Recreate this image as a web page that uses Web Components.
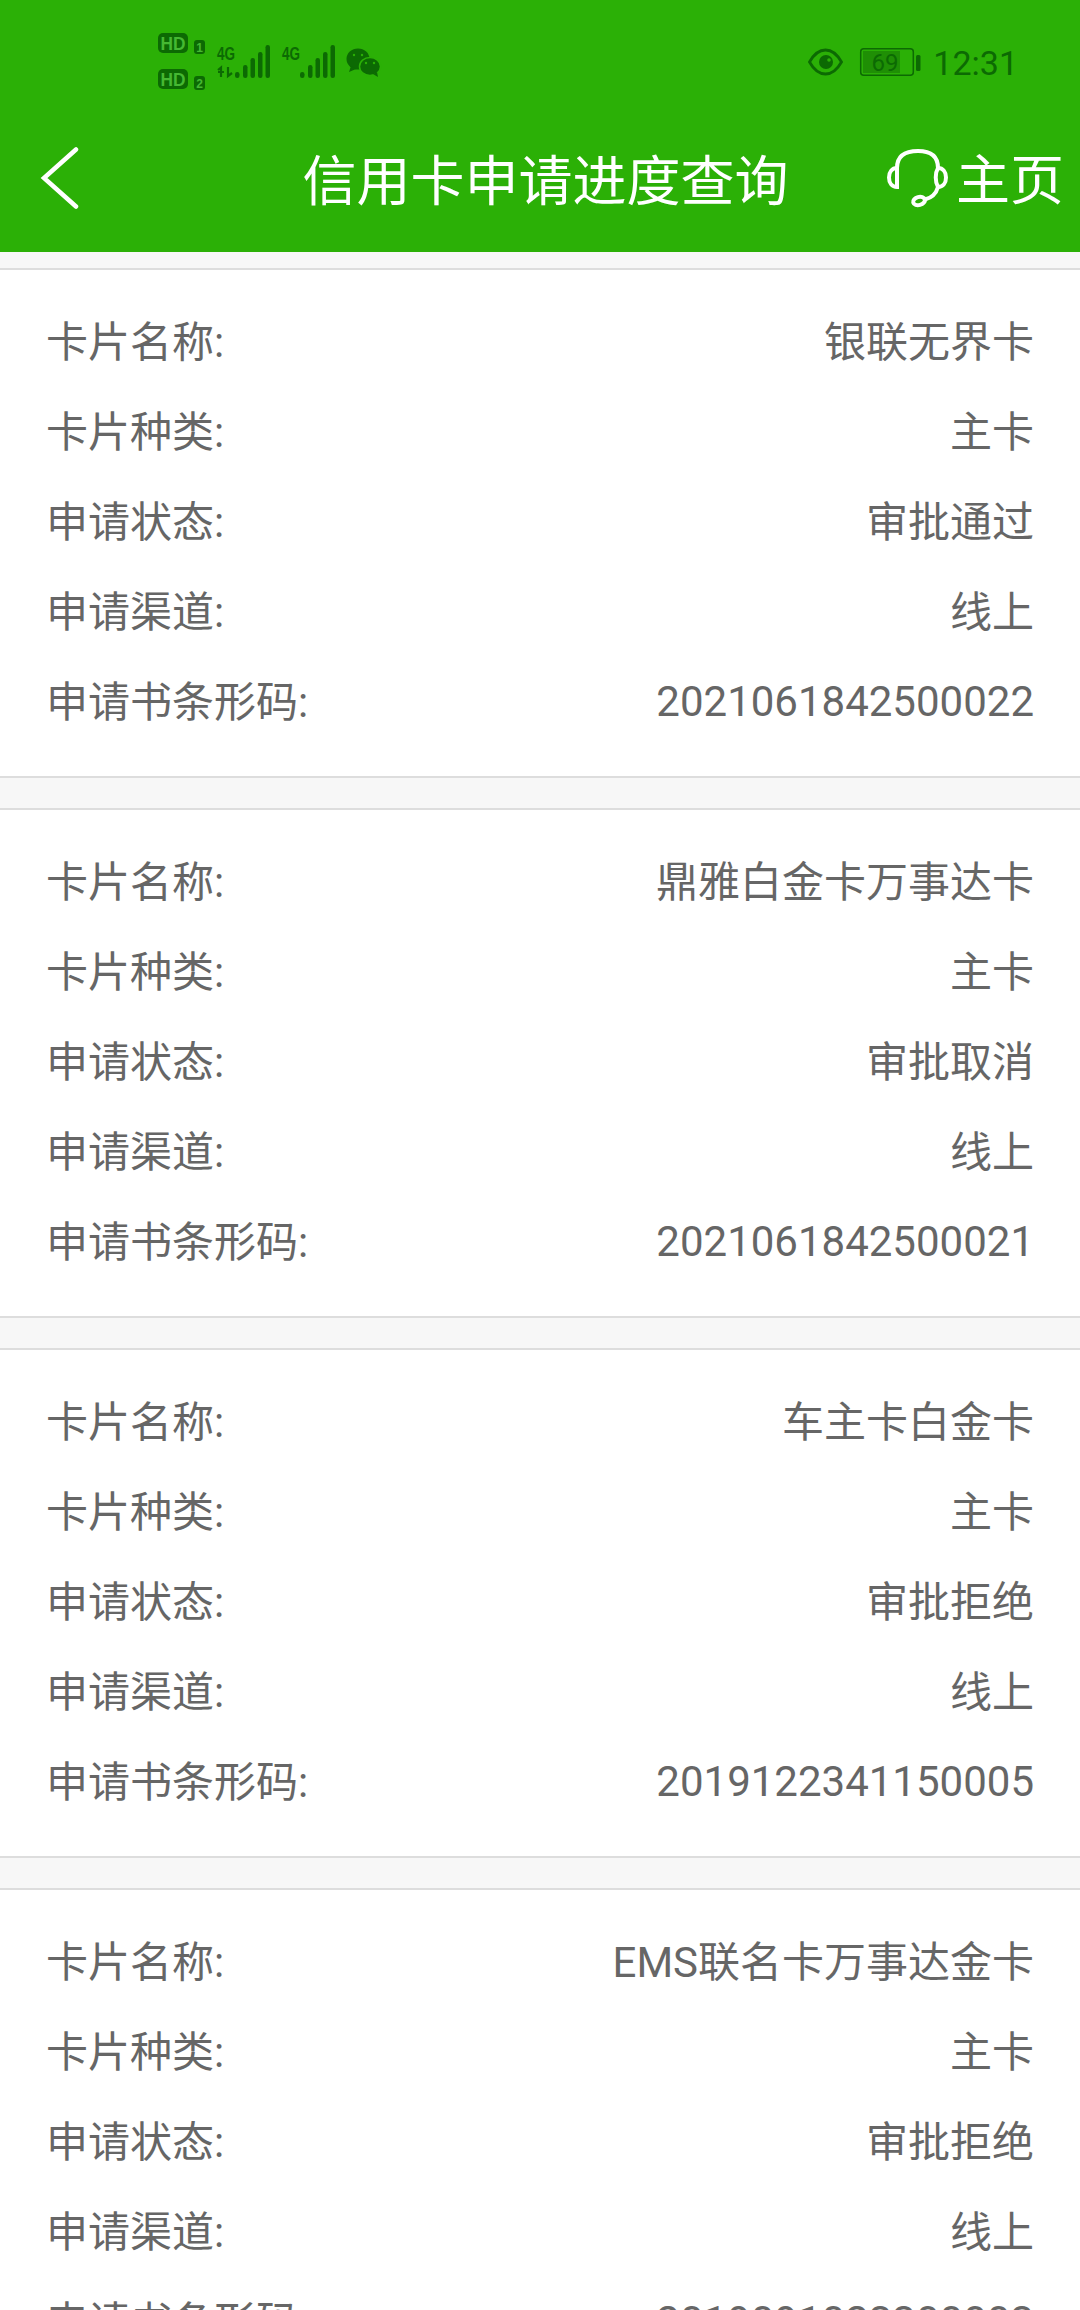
<!DOCTYPE html>
<html lang="zh"><head><meta charset="utf-8"><style>
html,body{margin:0;padding:0;width:1080px;height:2310px;overflow:hidden;background:#f7f7f7;font-family:"Noto Sans CJK SC",Roboto,sans-serif}
</style></head><body>
<app-header></app-header>
<card-list>
<app-card name="银联无界卡" status="审批通过" code="2021061842500022"></app-card>
<app-card name="鼎雅白金卡万事达卡" status="审批取消" code="2021061842500021"></app-card>
<app-card name="车主卡白金卡" status="审批拒绝" code="2019122341150005"></app-card>
<app-card name="EMS联名卡万事达金卡" status="审批拒绝" code="2019091023300003"></app-card>
</card-list>
<script>
class AppHeader extends HTMLElement{constructor(){super();this.attachShadow({mode:'open'}).innerHTML=`<style>
:host{display:block;height:252px;background:#2bb006;color:#fff}
.status{height:120px;display:flex;align-items:flex-start;justify-content:space-between;padding:26px 62px 0 156px;color:#0c6a03;box-sizing:border-box}
.right{display:flex;align-items:center;margin-top:18px}
.time{font:34px/34px Roboto,sans-serif;margin:2px 0 0 11px;color:#0c6a03}
.nav{height:132px;box-sizing:border-box;display:grid;grid-template-columns:1fr auto 1fr;align-items:center;padding:0 16px 14px 40px}
.title{font-size:54px;margin:-3px 0 0 -13px;white-space:nowrap}
.home{display:flex;align-items:center;font-size:54px;gap:8px;justify-self:end}
.home span{margin-top:-5px}
svg{display:block}
</style>
<div class="status">
<svg width="226" height="74" viewBox="156 26 226 74">
<g font-family="Liberation Sans" font-weight="700" text-anchor="middle" fill="#45b832">
<rect x="158" y="33" width="30" height="20" rx="5" fill="#0c6a03"/><text x="173" y="49.500" font-size="18" textLength="25" lengthAdjust="spacingAndGlyphs">HD</text>
<rect x="194" y="40" width="11" height="14" rx="3" fill="#0c6a03"/><text x="199.500" y="52" font-size="12">1</text>
<rect x="158" y="69" width="30" height="20" rx="5" fill="#0c6a03"/><text x="173" y="85.500" font-size="18" textLength="25" lengthAdjust="spacingAndGlyphs">HD</text>
<rect x="194" y="76" width="11" height="14" rx="3" fill="#0c6a03"/><text x="199.500" y="88" font-size="12">2</text>
</g>
<g font-family="Liberation Sans" font-weight="700" font-size="18" fill="#0c6a03">
<text x="217" y="60" textLength="18" lengthAdjust="spacingAndGlyphs">4G</text>
<text x="282" y="60" textLength="18" lengthAdjust="spacingAndGlyphs">4G</text>
</g>
<path d="M218 70l3-2.500V77M218 72h6M228 67v9l4-3" stroke="#0c6a03" stroke-width="2.200" fill="none"/>
<g fill="#0c6a03">
<rect x="235" y="72" width="4.500" height="6" rx="2.200"/><rect x="243" y="65" width="4.500" height="13" rx="2.200"/><rect x="250.500" y="58" width="4.500" height="20" rx="2.200"/><rect x="258" y="52" width="4.500" height="26" rx="2.200"/><rect x="265.500" y="45" width="4.500" height="33" rx="2.200"/>
<rect x="300" y="72" width="4.500" height="6" rx="2.200"/><rect x="308" y="65" width="4.500" height="13" rx="2.200"/><rect x="315.500" y="58" width="4.500" height="20" rx="2.200"/><rect x="323" y="52" width="4.500" height="26" rx="2.200"/><rect x="330.500" y="45" width="4.500" height="33" rx="2.200"/>
<ellipse cx="358" cy="59" rx="11.500" ry="10.500"/><path d="M351 66l-2 6 7-3z"/>
<ellipse cx="370" cy="66.500" rx="10.500" ry="9" stroke="#2bb006" stroke-width="1.500"/><path d="M373 74l5 3-1-5z"/>
</g>
<g fill="#2bb006"><circle cx="354" cy="55" r="1.200"/><circle cx="362" cy="55" r="1.200"/><circle cx="366" cy="63" r="1.200"/><circle cx="374" cy="63" r="1.200"/></g>
</svg>
<div class="right">
<svg width="116" height="34" viewBox="806 44 116 34">
<path d="M809.500 61C814 53 819 49 825.500 49S837 53 841.500 61C837 69 832 73 825.500 73S814 69 809.500 61z" fill="none" stroke="#0c6a03" stroke-width="2.800"/><circle cx="826" cy="61" r="7" fill="#0c6a03"/><circle cx="829" cy="59" r="1.800" fill="#2bb006"/>
<rect x="860.700" y="47.700" width="52.600" height="26.600" rx="3" fill="none" stroke="#0c6a03" stroke-width="1.500"/><rect x="863" y="50" width="37" height="22" fill="#1f8f05"/><text x="885" y="70" font-family="Roboto" font-size="24" fill="#0c6a03" text-anchor="middle">69</text>
<rect x="916" y="54" width="4.500" height="16" rx="1.500" fill="#0c6a03"/>
</svg>
<span class="time">12:31</span></div></div>
<div class="nav">
<svg width="40" height="64" viewBox="40 147 40 64"><path d="M76 149.500L44 178l32 28.500" fill="none" stroke="#fff" stroke-width="4.500" stroke-linecap="round"/></svg>
<div class="title">信用卡申请进度查询</div>
<div class="home"><svg width="62" height="70" viewBox="886 144 62 70" fill="none" stroke="#fff" stroke-width="4"><path d="M897 168C897 156 905 151 918 151S938 156 938 168"/><path d="M897 168C892 168 889 172 889 177.500S892 187 897 187z"/><path d="M938 168C943 168 946 172 946 177.500S943 187 938 187C935 182 935 173 938 168z"/><path d="M938 187C936 194 931 198 925 199.500"/><ellipse cx="919" cy="201" rx="6" ry="4" transform="rotate(-15 919 201)"/></svg><span>主页</span></div>
</div>`}}
customElements.define('app-header',AppHeader);
class CardList extends HTMLElement{constructor(){super();this.attachShadow({mode:'open'}).innerHTML=`<style>:host{display:flex;flex-direction:column;gap:30px;padding-top:16px}</style><slot></slot>`}}
customElements.define('card-list',CardList);
class InfoRow extends HTMLElement{constructor(){super();this.attachShadow({mode:'open'}).innerHTML=`<style>
:host{display:flex;justify-content:space-between;align-items:center;height:90px;color:#666;font-size:42px;font-family:Roboto,"Noto Sans CJK SC",sans-serif}
:host([numeric]) .v{padding-top:6px}
</style><span><slot name="k"></slot></span><span class="v"><slot name="v"></slot></span>`}}
customElements.define('info-row',InfoRow);
class AppCard extends HTMLElement{constructor(){super();const r=this.attachShadow({mode:'open'});
r.innerHTML=`<style>:host{display:block;box-sizing:border-box;height:510px;flex:none;background:#fff;border-top:2px solid #ddd;border-bottom:2px solid #ddd;padding:23px 46px 0 46px}</style>`;
const rows=[['卡片名称:',this.getAttribute('name')],['卡片种类:','主卡'],['申请状态:',this.getAttribute('status')],['申请渠道:','线上'],['申请书条形码:',this.getAttribute('code')]];
for(const [k,v] of rows){const e=document.createElement('info-row');if(/^\d+$/.test(v))e.setAttribute('numeric','');const a=document.createElement('span');a.slot='k';a.textContent=k;const b=document.createElement('span');b.slot='v';b.textContent=v;e.append(a,b);r.append(e)}}}
customElements.define('app-card',AppCard);
</script></body></html>
